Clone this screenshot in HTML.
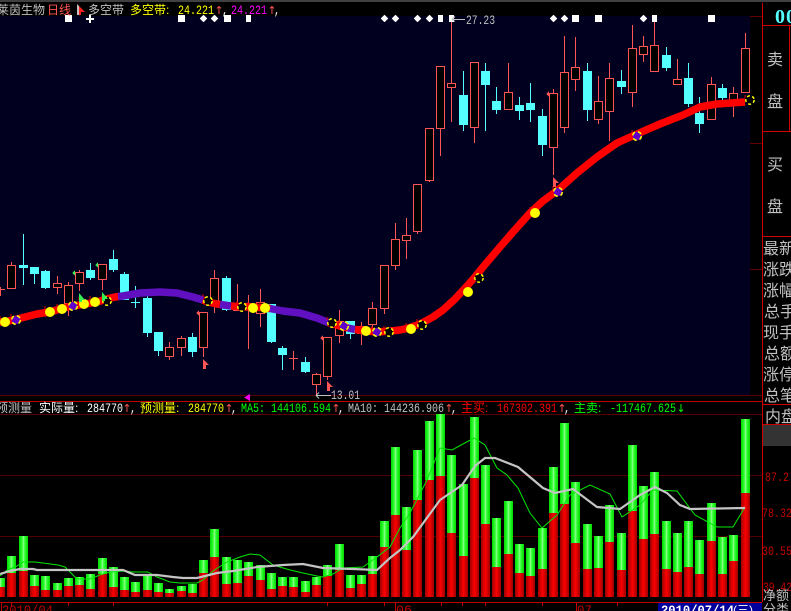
<!DOCTYPE html>
<html><head><meta charset="utf-8"><style>
html,body{margin:0;padding:0;background:#000;width:791px;height:611px;overflow:hidden}
svg{position:absolute;left:0;top:0;display:block}
.c{font-family:"Liberation Sans","WenQuanYi Zen Hei","Noto Sans CJK SC",sans-serif;font-size:12px}
.b{font-family:"Liberation Sans","WenQuanYi Zen Hei","Noto Sans CJK SC",sans-serif;font-size:16px}
.m{font-family:"Liberation Mono",monospace;font-size:13px}
.a{font-family:"DejaVu Sans",sans-serif;font-size:11px;text-anchor:middle}
.vol rect{width:9px}
</style></head><body>
<svg width="791" height="611" viewBox="0 0 791 611" xmlns="http://www.w3.org/2000/svg">
<defs>
<linearGradient id="g" x1="0" x2="1" y1="0" y2="0"><stop offset="0" stop-color="#00d800"/><stop offset=".35" stop-color="#30ff30"/><stop offset=".5" stop-color="#90ff90"/><stop offset=".65" stop-color="#30ff30"/><stop offset="1" stop-color="#00d800"/></linearGradient>
<linearGradient id="r" x1="0" x2="1" y1="0" y2="0"><stop offset="0" stop-color="#a00000"/><stop offset=".35" stop-color="#e00000"/><stop offset=".5" stop-color="#ff0000"/><stop offset=".65" stop-color="#e00000"/><stop offset="1" stop-color="#a00000"/></linearGradient>
</defs>
<rect width="791" height="611" fill="#000"/>
<rect width="791" height="2" fill="#404040"/>
<rect x="0" y="16" width="750" height="379" fill="#02001f"/>

<!-- grid -->
<g shape-rendering="crispEdges">
<path d="M750 16.5H762M750 143.5H762M750 269.5H762" stroke="#600000"/>
<path d="M0 395.5H762M0 414.5H762" stroke="#5a0000"/>
<path d="M0 475.5H762M0 536.5H762" stroke="#500000"/>
<path d="M0 401.5H762" stroke="#c00000"/>
<path d="M0 602.5H762" stroke="#c00000"/>
<path d="M762.5 3V602M762 25.5H791M762 131.5H791M762 236.5H791M762 404.5H791M762 424.5H791M789.5 25V131" stroke="#d00000"/>
<path d="M1.5 602V611M11.5 602V606M68.5 602V606M113.5 602V606M327.5 602V606M384.5 602V606M395.5 602V611M441.5 602V606M462.5 602V606M485.5 602V606M542.5 602V606M576.5 602V611M617.5 602V606" stroke="#c00000"/>
<rect x="763" y="425" width="28" height="21" fill="#333"/>
</g>

<!-- candles -->
<g shape-rendering="crispEdges">
<path fill="none" stroke="#ff5555" d="M0.5 287V296M-4 289.5H5M11.5 262V266M57.5 276V294M68.5 282V316M79.5 270V291M102.5 280V290M169.5 342V360M181.5 336V356M203.5 348V357M214.5 270V313M237.5 284V310M248.5 295V349M260.5 289V327M289 358.5H298M293.5 351V370M316.5 373V395M327.5 377V380M339.5 310V343M361.5 322V345M372.5 302V330M384.5 309V314M395.5 223V270M406.5 218V259M417.5 232V234M429.5 181V182M440.5 129V156M451.5 17V122M474.5 128V143M508.5 63V92M553.5 89V175M564.5 36V133M575.5 37V91M598.5 76V124M609.5 63V141M632.5 25V107M643.5 36V62M654.5 16V45M677.5 59V80M711.5 77V84M733.5 87V117M745.5 33V48"/>
<path fill="#000" stroke="#ff5555" d="M7.5 265.5h8V288.5h-8zM53.5 283.5h8V287.5h-8zM64.5 285.5h8V303.5h-8zM75.5 272.5h8V283.5h-8zM98.5 264.5h8V279.5h-8zM165.5 347.5h8V356.5h-8zM177.5 338.5h8V347.5h-8zM199.5 312.5h8V347.5h-8zM210.5 278.5h8V303.5h-8zM233.5 303.5h8V310.5h-8zM244.5 303.5h8V307.5h-8zM256.5 302.5h8V313.5h-8zM312.5 374.5h8V384.5h-8zM323.5 337.5h8V376.5h-8zM335.5 321.5h8V335.5h-8zM357.5 326.5h8V333.5h-8zM368.5 308.5h8V324.5h-8zM380.5 265.5h8V308.5h-8zM391.5 239.5h8V265.5h-8zM402.5 235.5h8V240.5h-8zM413.5 184.5h8V231.5h-8zM425.5 128.5h8V180.5h-8zM436.5 66.5h8V128.5h-8zM447.5 83.5h8V87.5h-8zM470.5 62.5h8V127.5h-8zM504.5 92.5h8V109.5h-8zM549.5 93.5h8V147.5h-8zM560.5 72.5h8V127.5h-8zM571.5 67.5h8V79.5h-8zM594.5 101.5h8V119.5h-8zM605.5 78.5h8V111.5h-8zM628.5 48.5h8V92.5h-8zM639.5 46.5h8V54.5h-8zM650.5 45.5h8V71.5h-8zM673.5 79.5h8V84.5h-8zM707.5 84.5h8V119.5h-8zM729.5 93.5h8V100.5h-8zM741.5 48.5h8V92.5h-8z"/>
<path fill="none" stroke="#54ffff" d="M23.5 234V285M34.5 267V284M45.5 270V289M90.5 263V280M113.5 250V272M124.5 272V300M135.5 286V308M131 302.5H140M147.5 296V337M158.5 332V356M192.5 333V357M226.5 276V311M271.5 304V343M282.5 346V370M305.5 357V373M350.5 321V339M463.5 71V131M485.5 63V131M496.5 87V114M519.5 97V120M530.5 83V122M542.5 109V156M587.5 63V121M621.5 70V94M666.5 47V71M688.5 63V107M699.5 97V133M722.5 84V100"/>
<path fill="#54ffff" d="M19 265h9v3h-9zM30 267h9v7h-9zM41 271h9v17h-9zM86 270h9v8h-9zM109 259h9v11h-9zM120 274h9v26h-9zM143 298h9v35h-9zM154 332h9v19h-9zM188 337h9v15h-9zM222 278h9v32h-9zM267 304h9v38h-9zM278 348h9v7h-9zM301 362h9v10h-9zM346 321h9v13h-9zM459 95h9v30h-9zM481 71h9v14h-9zM492 101h9v9h-9zM515 105h9v6h-9zM526 103h9v7h-9zM538 116h9v29h-9zM583 71h9v39h-9zM617 81h9v6h-9zM662 55h9v13h-9zM684 78h9v26h-9zM695 113h9v11h-9zM718 88h9v10h-9z"/>
<!-- small side markers -->
<path fill="#33ee55" d="M75 270v6l-3-3zM98 262v6l-3-3z"/>
<path fill="#ff5555" d="M199 310v6l-3-3zM323 335v6l-3-3zM549 91v6l-3-3z"/>
<path fill="#ee00ee" d="M250 394v7l-6-3.500z"/>
</g>

<!-- band -->
<g fill="none" stroke-width="7.500" stroke-linejoin="round">
<polyline stroke="#ff0000" points="-2,322 5,322 17,319 37,314 50,312 63,308 73,306 85,304 97,302 107,299 115,297 119,296.500"/>
<polyline stroke="#6010c0" points="118,296.500 123,296 140,293 160,292 177,293 193,297 203,300"/>
<polyline stroke="#ff0000" points="203,300 208,302 217,304 220,304.500"/>
<polyline stroke="#6010c0" points="220,304.500 231,306"/>
<polyline stroke="#ff0000" points="231,306 243,307 253,307 267,308 270,308.500"/>
<polyline stroke="#6010c0" points="270,308.500 283,311 300,313 317,318 328,322.500"/>
<polyline stroke="#ff0000" points="328,322.500 330,323 343,327 348,328"/>
<polyline stroke="#6010c0" points="348,328 355,329.500"/>
<polyline stroke="#ff0000" points="355,329.500 367,331 377,332 390,331 400,330 407,328.500 420,324 433,317 443,310 455,299 467,286 475,277 483,267 500,247 513,232 530,213 543,201 558,190 577,173 597,157 617,143 637,134 660,124 683,115 700,107 717,104 745,102"/>
</g>

<!-- ticks above dots -->
<path stroke="#e00000" fill="none" d="M0 316v3M11 314v3M45 306v3M57 304v3M68 303v3M79 297v3M90 296v3M102 295v3M203 294v3M237 301v3M248 302v3M260 302v3M327 317v3M339 320v3M361 325v3M372 326v3M384 326v3M406 323v3M417 319v3M463 286v3M474 272v3M530 207v3M553 186v3M632 130v3M745 95v3"/>

<!-- dots -->
<g fill="#ffff00">
<circle cx="5" cy="322" r="5"/><circle cx="50" cy="312" r="5"/><circle cx="62" cy="309" r="5"/><circle cx="84" cy="304" r="5"/><circle cx="95" cy="302" r="5"/><circle cx="253" cy="308" r="5"/><circle cx="265" cy="308" r="5"/><circle cx="366" cy="331" r="5"/><circle cx="411" cy="329" r="5"/><circle cx="468" cy="292" r="5"/><circle cx="535" cy="213" r="5"/>
</g>
<g fill="#000" stroke="#ffff00" stroke-width="1.500" stroke-dasharray="3 2.500">
<circle cx="107" cy="301" r="4.200"/><circle cx="208" cy="301" r="4.200"/><circle cx="242" cy="307" r="4.200"/><circle cx="332" cy="323" r="4.200"/><circle cx="389" cy="332" r="4.200"/><circle cx="422" cy="325" r="4.200"/><circle cx="479" cy="278" r="4.200"/><circle cx="750" cy="100" r="4.200"/>
</g>
<g fill="#6000c8" stroke="#ffff00" stroke-width="1.500" stroke-dasharray="4 3">
<circle cx="16" cy="320" r="4.300"/><circle cx="73" cy="306" r="4.300"/><circle cx="344" cy="326" r="4.300"/><circle cx="377" cy="332" r="4.300"/><circle cx="558" cy="192" r="4.300"/><circle cx="637" cy="136" r="4.300"/>
</g>

<!-- flags -->
<path fill="#33ee55" d="M79 293l6 7-3 0 0 2-3 0zM102 292l6 7-3 0 0 2-3 0z"/>
<path fill="#ff5555" d="M203 359l6 6-3 0 0 4-3 0zM327 381l6 6-3 0 0 4-3 0zM553 177l6 6-3 0 0 4-3 0z"/>

<!-- top markers -->
<g fill="#fff" shape-rendering="crispEdges">
<path d="M65 15h7v7h-7zM178 15h7v7h-7zM224 15h7v7h-7zM572 15h7v7h-7zM595 15h7v7h-7zM708 15h7v7h-7z"/>
<path d="M246 15h5v7h-5zM438 15h5v7h-5zM449 15h5v7h-5zM652 15h5v7h-5z"/>
<path d="M89 15h2v3h3v2h-3v3h-2v-3h-3v-2h3z"/>
</g>
<g fill="#fff" stroke="#fff" stroke-width="1.200" stroke-linejoin="round">
<path d="M203.500 15.500l3 3-3 3-3-3zM214.500 15.500l3 3-3 3-3-3zM384.500 15.500l3 3-3 3-3-3zM395.500 15.500l3 3-3 3-3-3zM417.500 15.500l3 3-3 3-3-3zM429.500 15.500l3 3-3 3-3-3zM553.500 15.500l3 3-3 3-3-3zM564.500 15.500l3 3-3 3-3-3zM643.500 15.500l3 3-3 3-3-3z"/>
</g>

<!-- extremes -->
<path stroke="#c0c0c0" fill="none" d="M452 19.500H465M452 19.500l3-3M452 19.500l3 2M316 395.500H331M316 395.500l3-3M316 395.500l3 3"/>
<text class="m" x="466" y="24" fill="#c0c0c0" textLength="29" lengthAdjust="spacingAndGlyphs">27.23</text>
<text class="m" x="331" y="399" fill="#c0c0c0" textLength="29" lengthAdjust="spacingAndGlyphs">13.01</text>

<!-- volume -->
<g class="vol" shape-rendering="crispEdges">
<g fill="url(#g)">
<rect x="-4" y="578" height="9"/><rect x="7" y="556" height="17"/><rect x="19" y="536" height="35"/><rect x="30" y="575" height="11"/><rect x="41" y="576" height="14"/><rect x="53" y="583" height="7"/><rect x="64" y="578" height="8"/><rect x="75" y="577" height="8"/><rect x="86" y="574" height="15"/><rect x="98" y="558" height="16"/><rect x="109" y="567" height="20"/><rect x="120" y="577" height="13"/><rect x="131" y="582" height="10"/><rect x="143" y="575" height="15"/><rect x="154" y="583" height="9"/><rect x="165" y="589" height="4"/><rect x="177" y="586" height="5"/><rect x="188" y="584" height="9"/><rect x="199" y="560" height="13"/><rect x="210" y="529" height="28"/><rect x="222" y="557" height="27"/><rect x="233" y="560" height="23"/><rect x="244" y="562" height="14"/><rect x="256" y="565" height="15"/><rect x="267" y="573" height="16"/><rect x="278" y="577" height="9"/><rect x="289" y="577" height="10"/><rect x="301" y="581" height="11"/><rect x="312" y="577" height="8"/><rect x="323" y="565" height="11"/><rect x="335" y="544" height="26"/><rect x="346" y="575" height="13"/><rect x="357" y="575" height="9"/><rect x="368" y="556" height="18"/><rect x="380" y="521" height="26"/><rect x="391" y="447" height="68"/><rect x="402" y="507" height="43"/><rect x="413" y="450" height="50"/><rect x="425" y="421" height="59"/><rect x="436" y="414" height="62"/><rect x="447" y="455" height="78"/><rect x="459" y="484" height="72"/><rect x="470" y="417" height="61"/><rect x="481" y="465" height="59"/><rect x="492" y="518" height="49"/><rect x="504" y="501" height="53"/><rect x="515" y="544" height="29"/><rect x="526" y="548" height="28"/><rect x="538" y="528" height="41"/><rect x="549" y="467" height="46"/><rect x="560" y="423" height="81"/><rect x="571" y="482" height="61"/><rect x="583" y="524" height="45"/><rect x="594" y="536" height="32"/><rect x="605" y="505" height="37"/><rect x="617" y="533" height="37"/><rect x="628" y="445" height="66"/><rect x="639" y="486" height="53"/><rect x="650" y="472" height="62"/><rect x="662" y="521" height="48"/><rect x="673" y="533" height="39"/><rect x="684" y="521" height="46"/><rect x="695" y="540" height="34"/><rect x="707" y="503" height="38"/><rect x="718" y="537" height="37"/><rect x="729" y="535" height="26"/><rect x="741" y="419" height="74"/>
</g>
<g fill="url(#r)">
<rect x="-4" y="587" height="10"/><rect x="7" y="573" height="24"/><rect x="19" y="571" height="26"/><rect x="30" y="586" height="11"/><rect x="41" y="590" height="7"/><rect x="53" y="590" height="7"/><rect x="64" y="586" height="11"/><rect x="75" y="585" height="12"/><rect x="86" y="589" height="8"/><rect x="98" y="574" height="23"/><rect x="109" y="587" height="10"/><rect x="120" y="590" height="7"/><rect x="131" y="592" height="5"/><rect x="143" y="590" height="7"/><rect x="154" y="592" height="5"/><rect x="165" y="593" height="4"/><rect x="177" y="591" height="6"/><rect x="188" y="593" height="4"/><rect x="199" y="573" height="24"/><rect x="210" y="557" height="40"/><rect x="222" y="584" height="13"/><rect x="233" y="583" height="14"/><rect x="244" y="576" height="21"/><rect x="256" y="580" height="17"/><rect x="267" y="589" height="8"/><rect x="278" y="586" height="11"/><rect x="289" y="587" height="10"/><rect x="301" y="592" height="5"/><rect x="312" y="585" height="12"/><rect x="323" y="576" height="21"/><rect x="335" y="570" height="27"/><rect x="346" y="588" height="9"/><rect x="357" y="584" height="13"/><rect x="368" y="574" height="23"/><rect x="380" y="547" height="50"/><rect x="391" y="515" height="82"/><rect x="402" y="550" height="47"/><rect x="413" y="500" height="97"/><rect x="425" y="480" height="117"/><rect x="436" y="476" height="121"/><rect x="447" y="533" height="64"/><rect x="459" y="556" height="41"/><rect x="470" y="478" height="119"/><rect x="481" y="524" height="73"/><rect x="492" y="567" height="30"/><rect x="504" y="554" height="43"/><rect x="515" y="573" height="24"/><rect x="526" y="576" height="21"/><rect x="538" y="569" height="28"/><rect x="549" y="513" height="84"/><rect x="560" y="504" height="93"/><rect x="571" y="543" height="54"/><rect x="583" y="569" height="28"/><rect x="594" y="568" height="29"/><rect x="605" y="542" height="55"/><rect x="617" y="570" height="27"/><rect x="628" y="511" height="86"/><rect x="639" y="539" height="58"/><rect x="650" y="534" height="63"/><rect x="662" y="569" height="28"/><rect x="673" y="572" height="25"/><rect x="684" y="567" height="30"/><rect x="695" y="574" height="23"/><rect x="707" y="541" height="56"/><rect x="718" y="574" height="23"/><rect x="729" y="561" height="36"/><rect x="741" y="493" height="104"/>
</g>
</g>
<polyline fill="none" stroke="#00e800" points="0,576 7,570 17,566 23,562 35,562 43,563 58,565 65,567 70,572 77,579 90,579 100,575 110,572 123,571 133,572 148,572 157,577 170,582 180,583 197,583 203,580 213,571 227,562 240,557 250,554 260,555 273,565 290,570 303,573 317,576 323,577 333,574 343,568 363,567 377,557 390,547 400,528 410,513 427,480 440,448 452,450 474,438 485,445 497,468 507,475 518,488 530,513 542,528 557,515 570,495 590,485 610,494 622,517 640,505 653,490 677,491 695,515 717,527 733,527 745,507"/>
<polyline fill="none" stroke="#c4c4c4" stroke-width="2.200" points="0,574 10,571 20,569 33,569 37,570 123,570 135,575 157,575 173,577 183,578 197,578 217,573 233,571 257,567 283,565 303,564 323,568 353,569 377,570 390,558 400,550 413,537 440,500 462,485 475,466 485,458 495,458 518,467 543,488 555,493 573,489 597,507 620,509 640,495 655,487 667,493 680,505 690,509 745,508"/>

<!-- title row -->
<path d="M77 4l8 8-4 0 0 3-4 0z" fill="#ff2020"/><path d="M77 4v11h2V6z" fill="#c0c0c0"/>
<text class="c" x="-3" y="14" fill="#c0c0c0">莱茵生物</text>
<text class="c" x="47" y="14" fill="#ff5555">日线</text>
<text class="c" x="88" y="14" fill="#c0c0c0">多空带</text>
<text class="c" x="130" y="14" fill="#ffff00">多空带:</text>
<text class="m" x="178" y="14" fill="#ffff00" textLength="36" lengthAdjust="spacingAndGlyphs">24.221</text>
<text class="a" x="219" y="14" fill="#ff5555">↑</text>
<text class="m" x="222" y="14" fill="#fff" textLength="6" lengthAdjust="spacingAndGlyphs">,</text>
<text class="m" x="231" y="14" fill="#ff00ff" textLength="36" lengthAdjust="spacingAndGlyphs">24.221</text>
<text class="a" x="272" y="14" fill="#ff5555">↑</text>
<text class="m" x="274" y="14" fill="#fff" textLength="6" lengthAdjust="spacingAndGlyphs">,</text>

<!-- volume row -->
<text class="c" x="-4" y="412" fill="#c0c0c0">预测量</text>
<text class="c" x="39" y="412" fill="#fff">实际量:</text>
<text class="m" x="87" y="412" fill="#fff" textLength="36" lengthAdjust="spacingAndGlyphs">284770</text>
<text class="a" x="127" y="412" fill="#ff5555">↑</text>
<text class="m" x="130" y="412" fill="#fff" textLength="6" lengthAdjust="spacingAndGlyphs">,</text>
<text class="c" x="140" y="412" fill="#ffff00">预测量:</text>
<text class="m" x="188" y="412" fill="#ffff00" textLength="36" lengthAdjust="spacingAndGlyphs">284770</text>
<text class="a" x="229" y="412" fill="#ff5555">↑</text>
<text class="m" x="231" y="412" fill="#fff" textLength="6" lengthAdjust="spacingAndGlyphs">,</text>
<text class="m" x="241" y="412" fill="#00ff00" textLength="24" lengthAdjust="spacingAndGlyphs">MA5:</text>
<text class="m" x="271" y="412" fill="#00ff00" textLength="60" lengthAdjust="spacingAndGlyphs">144106.594</text>
<text class="a" x="336" y="412" fill="#ff5555">↑</text>
<text class="m" x="338" y="412" fill="#fff" textLength="6" lengthAdjust="spacingAndGlyphs">,</text>
<text class="m" x="348" y="412" fill="#c0c0c0" textLength="30" lengthAdjust="spacingAndGlyphs">MA10:</text>
<text class="m" x="384" y="412" fill="#c0c0c0" textLength="60" lengthAdjust="spacingAndGlyphs">144236.906</text>
<text class="a" x="449" y="412" fill="#ff5555">↑</text>
<text class="m" x="451" y="412" fill="#fff" textLength="6" lengthAdjust="spacingAndGlyphs">,</text>
<text class="c" x="461" y="412" fill="#ff0000">主买:</text>
<text class="m" x="497" y="412" fill="#ff0000" textLength="60" lengthAdjust="spacingAndGlyphs">167302.391</text>
<text class="a" x="562" y="412" fill="#ff5555">↑</text>
<text class="m" x="564" y="412" fill="#fff" textLength="6" lengthAdjust="spacingAndGlyphs">,</text>
<text class="c" x="574" y="412" fill="#00ff00">主卖:</text>
<text class="m" x="610" y="412" fill="#00ff00" textLength="66" lengthAdjust="spacingAndGlyphs">-117467.625</text>
<text class="a" x="681" y="412" fill="#00ff00">↓</text>

<!-- right panel -->
<text x="775" y="23" font-family="Liberation Serif,serif" font-size="20" font-weight="bold" fill="#54ffff" letter-spacing="1">00</text>
<g fill="#c0c0c0" class="b">
<text class="b" x="767" y="65">卖</text>
<text class="b" x="767" y="107">盘</text>
<text class="b" x="767" y="170">买</text>
<text class="b" x="767" y="212">盘</text>
<text class="b" x="763" y="254">最新</text>
<text class="b" x="763" y="275">涨跌</text>
<text class="b" x="763" y="296">涨幅</text>
<text class="b" x="764" y="317">总手</text>
<text class="b" x="763" y="338">现手</text>
<text class="b" x="764" y="359">总额</text>
<text class="b" x="763" y="380">涨停</text>
<text class="b" x="764" y="401">总笔</text>
<text class="b" x="765" y="422">内盘</text>
</g>
<g fill="#c00000">
<text class="m" x="765" y="481" textLength="24" lengthAdjust="spacingAndGlyphs">87.2</text>
<text class="m" x="762" y="517" textLength="30" lengthAdjust="spacingAndGlyphs">78.32</text>
<text class="m" x="762" y="555" textLength="30" lengthAdjust="spacingAndGlyphs">30.55</text>
<text class="m" x="763" y="591" textLength="29" lengthAdjust="spacingAndGlyphs">39.42</text>
</g>
<text class="c" x="763" y="600" fill="#c0c0c0" style="font-size:13px">净额</text>
<text class="c" x="763" y="614" fill="#c0c0c0" style="font-size:13px">分类</text>

<!-- bottom dates -->
<text class="m" x="2" y="614" fill="#c00000" textLength="51" lengthAdjust="spacingAndGlyphs">2010/04</text>
<text class="m" x="396" y="614" fill="#c00000" textLength="16" lengthAdjust="spacingAndGlyphs">06</text>
<text class="m" x="577" y="614" fill="#c00000" textLength="15" lengthAdjust="spacingAndGlyphs">07</text>
<rect x="658" y="603" width="104" height="8" fill="#00009c" shape-rendering="crispEdges"/>
<text class="m" x="661" y="614" fill="#fff" font-weight="bold" textLength="73" lengthAdjust="spacingAndGlyphs">2010/07/14</text>
<text class="c" x="733" y="614" fill="#fff">(三)</text>
</svg>
</body></html>
